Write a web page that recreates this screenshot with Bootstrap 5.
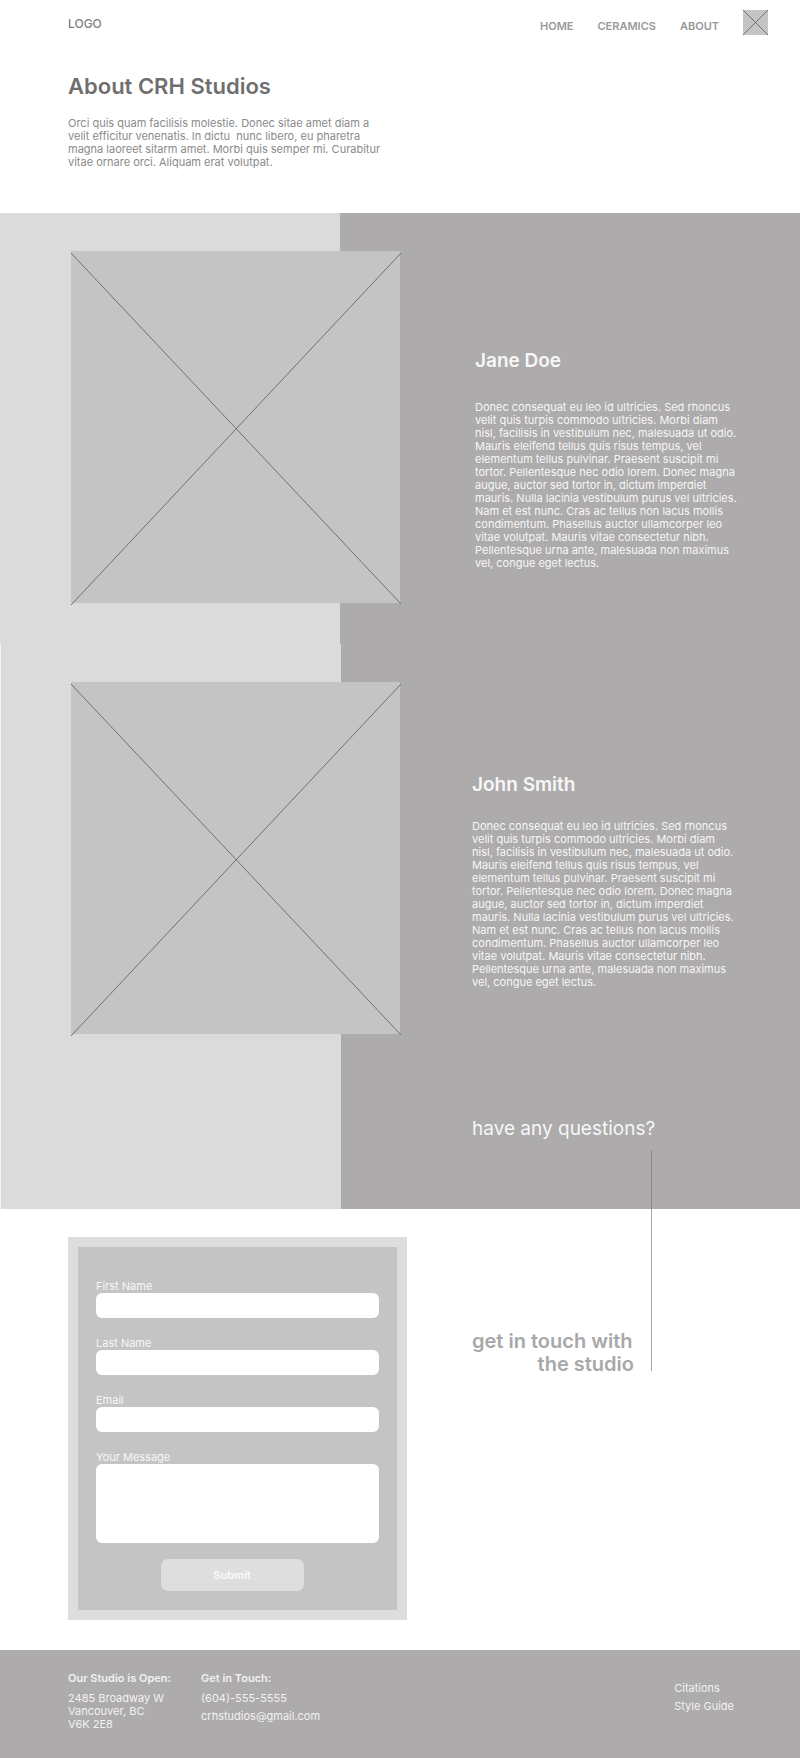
<!DOCTYPE html>
<html lang="en">
<head>
<meta charset="utf-8">
<meta name="viewport" content="width=device-width, initial-scale=1">
<title>About CRH Studios</title>
<link href="https://cdn.jsdelivr.net/npm/bootstrap@5.3.0/dist/css/bootstrap.min.css" rel="stylesheet">
<style>
  body { font-family: Inter, "Liberation Sans", sans-serif; font-size: 11px; line-height: 13px; color: #8a8a8a; background: #fff; }
  a { color: inherit; text-decoration: none; }
  .site-head { padding: 10px 32px 0 68px; }
  .brand { font-size: 12px; line-height: 28px; color: #808080; font-weight: 500; }
  .site-nav { gap: 24px; line-height: 33px; color: #999; font-weight: 600; }
  .cross { display: block; overflow: visible; background: #c4c4c4; }
  .cross line { stroke: #707070; vector-effect: non-scaling-stroke; }
  .intro { padding: 30px 68px 44px; }
  .intro h1 { font-size: 22px; line-height: 26px; font-weight: 600; color: #6f6f6f; margin-bottom: 18px; }
  .person { background: linear-gradient(to right, #dbdbdb 42.5%, #adabab 42.5%); color: #f7f7f7; padding: 38px 0 41px 71px; }
  .person.second { padding-bottom: 0; border-left: 1px solid #f4f4f4; padding-left: 70px; }
  .portrait { width: 329px; flex: 0 1 auto; aspect-ratio: 329 / 352; }
  .bio { margin-left: 75px; padding-top: 98px; }
  .second .bio { margin-left: 72px; padding-top: 91px; }
  .bio h2 { font-size: 19px; line-height: 24px; font-weight: 600; margin-bottom: 28px; }
  .second .bio h2 { margin-bottom: 23px; }
  .lane { width: 180px; }
  .ask { margin-left: 401px; padding-top: 83px; }
  .ask h2 { font-size: 19px; line-height: 24px; font-weight: 400; margin-bottom: 9px; }
  .stem { height: 59px; border-right: 1px solid #888; }
  .contact { padding: 0 0 30px 68px; }
  .panel { width: 339px; margin-top: 28px; border: 10px solid #ddd; background: #c4c4c4; padding: 33px 18px 19px; color: #f7f7f7; }
  .field { margin-bottom: 19px; }
  .field.message { margin-bottom: 16px; }
  .field .form-control { height: 25px; min-height: 0; padding: 2px 8px; border: 0; border-radius: 6px; font-size: 11px; }
  .field textarea.form-control { height: 79px; resize: none; }
  .send-row { padding-right: 11px; }
  .send { width: 143px; height: 32px; padding: 0; border: 0; border-radius: 7px; background: #dedede; color: #fafafa; font-size: 11px; font-weight: 600; }
  .touch { margin-left: 65px; border-right: 1px solid #a5a5a5; padding-top: 121px; height: 162px; font-size: 20px; line-height: 23px; font-weight: 600; color: #a8a8a8; }
  .touch span { padding-right: 17px; }
  .site-foot { background: #adabab; color: #f2f2f2; padding: 22px 66px 26px 68px; min-height: 108px; }
  .site-foot h3 { font-size: 11px; line-height: 13px; font-weight: 600; margin-bottom: 7px; }
  .site-foot address { line-height: 13px; }
  .reach { margin-left: 30px; }
  .stack a { display: block; margin-bottom: 5px; }
  .more { padding-top: 10px; }
</style>
</head>
<body>
<header class="site-head d-flex justify-content-between align-items-start text-nowrap">
  <a class="brand" href="#">LOGO</a>
  <nav class="site-nav d-flex">
    <a href="#">HOME</a><a href="#">CERAMICS</a><a href="#">ABOUT</a>
    <svg class="cross" width="25" height="25" viewBox="0 0 25 25"><line x1="0" y1="0" x2="25" y2="25"/><line x1="25" y1="0" x2="0" y2="25"/></svg>
  </nav>
</header>
<main>
  <section class="intro">
    <h1>About CRH Studios</h1>
    <p class="mb-0">Orci quis quam facilisis molestie. Donec sitae amet diam a<br>velit efficitur venenatis. In dictu &nbsp;nunc libero, eu pharetra<br>magna laoreet sitarm amet. Morbi quis semper mi. Curabitur<br>vitae ornare orci. Aliquam erat volutpat.</p>
  </section>

  <section class="person d-flex align-items-start">
    <svg class="portrait cross" viewBox="0 0 329 352" preserveAspectRatio="none"><line x1="0" y1="2" x2="330" y2="353"/><line x1="330" y1="2" x2="0" y2="354"/></svg>
    <div class="bio text-nowrap">
      <h2>Jane Doe</h2>
      <p class="mb-0">Donec consequat eu leo id ultricies. Sed rhoncus<br>velit quis turpis commodo ultricies. Morbi diam<br>nisl, facilisis in vestibulum nec, malesuada ut odio.<br>Mauris eleifend tellus quis risus tempus, vel<br>elementum tellus pulvinar. Praesent suscipit mi<br>tortor. Pellentesque nec odio lorem. Donec magna<br>augue, auctor sed tortor in, dictum imperdiet<br>mauris. Nulla lacinia vestibulum purus vel ultricies.<br>Nam et est nunc. Cras ac tellus non lacus mollis<br>condimentum. Phasellus auctor ullamcorper leo<br>vitae volutpat. Mauris vitae consectetur nibh.<br>Pellentesque urna ante, malesuada non maximus<br>vel, congue eget lectus.</p>
    </div>
  </section>

  <section class="person second">
    <div class="d-flex align-items-start">
      <svg class="portrait cross" viewBox="0 0 329 352" preserveAspectRatio="none"><line x1="0" y1="2" x2="330" y2="353"/><line x1="330" y1="2" x2="0" y2="354"/></svg>
      <div class="bio text-nowrap">
        <h2>John Smith</h2>
        <p class="mb-0">Donec consequat eu leo id ultricies. Sed rhoncus<br>velit quis turpis commodo ultricies. Morbi diam<br>nisl, facilisis in vestibulum nec, malesuada ut odio.<br>Mauris eleifend tellus quis risus tempus, vel<br>elementum tellus pulvinar. Praesent suscipit mi<br>tortor. Pellentesque nec odio lorem. Donec magna<br>augue, auctor sed tortor in, dictum imperdiet<br>mauris. Nulla lacinia vestibulum purus vel ultricies.<br>Nam et est nunc. Cras ac tellus non lacus mollis<br>condimentum. Phasellus auctor ullamcorper leo<br>vitae volutpat. Mauris vitae consectetur nibh.<br>Pellentesque urna ante, malesuada non maximus<br>vel, congue eget lectus.</p>
      </div>
    </div>
    <div class="ask lane text-nowrap">
      <h2>have any questions?</h2>
      <div class="stem"></div>
    </div>
  </section>

  <section class="contact d-flex align-items-start">
    <form class="panel">
      <div class="field"><label class="d-block" for="first">First Name</label><input class="form-control" id="first" type="text"></div>
      <div class="field"><label class="d-block" for="last">Last Name</label><input class="form-control" id="last" type="text"></div>
      <div class="field"><label class="d-block" for="email">Email</label><input class="form-control" id="email" type="email"></div>
      <div class="field message"><label class="d-block" for="msg">Your Message</label><textarea class="form-control" id="msg"></textarea></div>
      <div class="send-row text-center"><button class="send btn" type="submit">Submit</button></div>
    </form>
    <div class="touch lane d-flex flex-column text-nowrap"><span>get in touch with</span><span class="text-end">the studio</span></div>
  </section>
</main>
<footer class="site-foot d-flex text-nowrap">
  <div>
    <h3>Our Studio is Open:</h3>
    <address class="mb-0">2485 Broadway W<br>Vancouver, BC<br>V6K 2E8</address>
  </div>
  <div class="reach stack">
    <h3>Get in Touch:</h3>
    <a href="#">(604)-555-5555</a><a href="#">crhstudios@gmail.com</a>
  </div>
  <div class="more stack ms-auto"><a href="#">Citations</a><a href="#">Style Guide</a></div>
</footer>
<script src="https://cdn.jsdelivr.net/npm/bootstrap@5.3.0/dist/js/bootstrap.bundle.min.js"></script>
</body>
</html>
